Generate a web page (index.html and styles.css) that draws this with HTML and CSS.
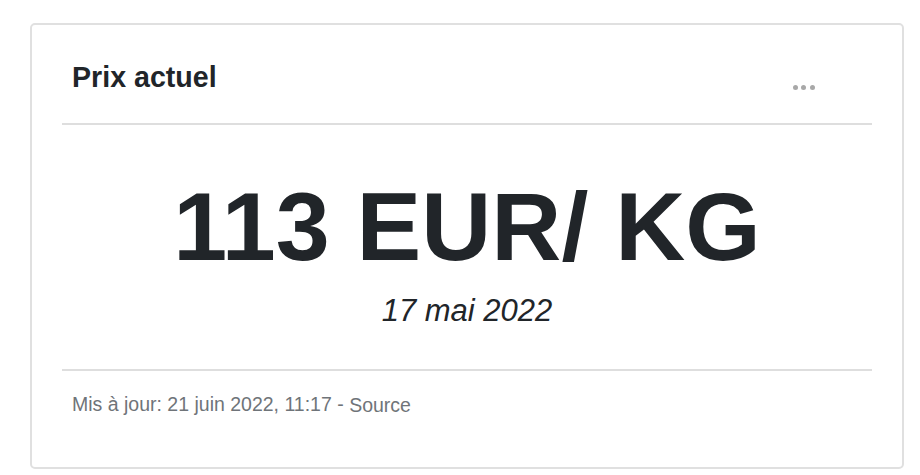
FILE: index.html
```html
<!DOCTYPE html>
<html lang="fr">
<head>
<meta charset="utf-8">
<title>Prix actuel</title>
<link rel="stylesheet" href="styles.css">
</head>
<body>
  <div class="card">
    <div class="card-header">
      <h2 class="card-title">Prix actuel</h2>
      <div class="menu" aria-label="Options">
        <span class="dot"></span><span class="dot"></span><span class="dot"></span>
      </div>
    </div>
    <div class="card-body">
      <div class="price">113 EUR/ KG</div>
      <div class="date">17 mai 2022</div>
    </div>
    <div class="card-footer">
      <span>Mis à jour: 21 juin 2022, 11:17 - </span><a class="source" href="#">Source</a>
    </div>
  </div>
</body>
</html>
```

FILE: styles.css
```css
html, body {
  margin: 0;
  background: #ffffff;
}

body {
  padding: 23px 16px 0 30px;
  font-family: "Liberation Sans", Arial, Helvetica, sans-serif;
  color: #212529;
}

.card {
  box-sizing: border-box;
  height: 446px;
  border: 2px solid #e0e0e0;
  border-radius: 5px;
  padding: 0 30px;
  display: flex;
  flex-direction: column;
}

.card-header {
  display: flex;
  justify-content: space-between;
  align-items: center;
  padding: 36px 57px 30px 10px;
  border-bottom: 2px solid #dedede;
}

.card-title {
  margin: 0;
  font-size: 28.6px;
  line-height: 32px;
  font-weight: bold;
  color: #212529;
}

.menu {
  display: flex;
  gap: 3.7px;
  margin-top: 20px;
}

.dot {
  width: 5px;
  height: 5px;
  border-radius: 50%;
  background: #a8a8a8;
}

.card-body {
  padding: 53px 0 40px;
  border-bottom: 2px solid #dedede;
  text-align: center;
}

.price {
  font-size: 97px;
  line-height: 98px;
  font-weight: bold;
  color: #212529;
}

.date {
  margin-top: 17px;
  font-size: 31px;
  line-height: 36px;
  font-style: italic;
  color: #212529;
}

.card-footer {
  padding: 19px 10px 0;
  font-size: 19.5px;
  line-height: 28px;
  color: #6f7479;
}

.source {
  color: #6f7479;
  text-decoration: none;
  vertical-align: -1px;
}
```
